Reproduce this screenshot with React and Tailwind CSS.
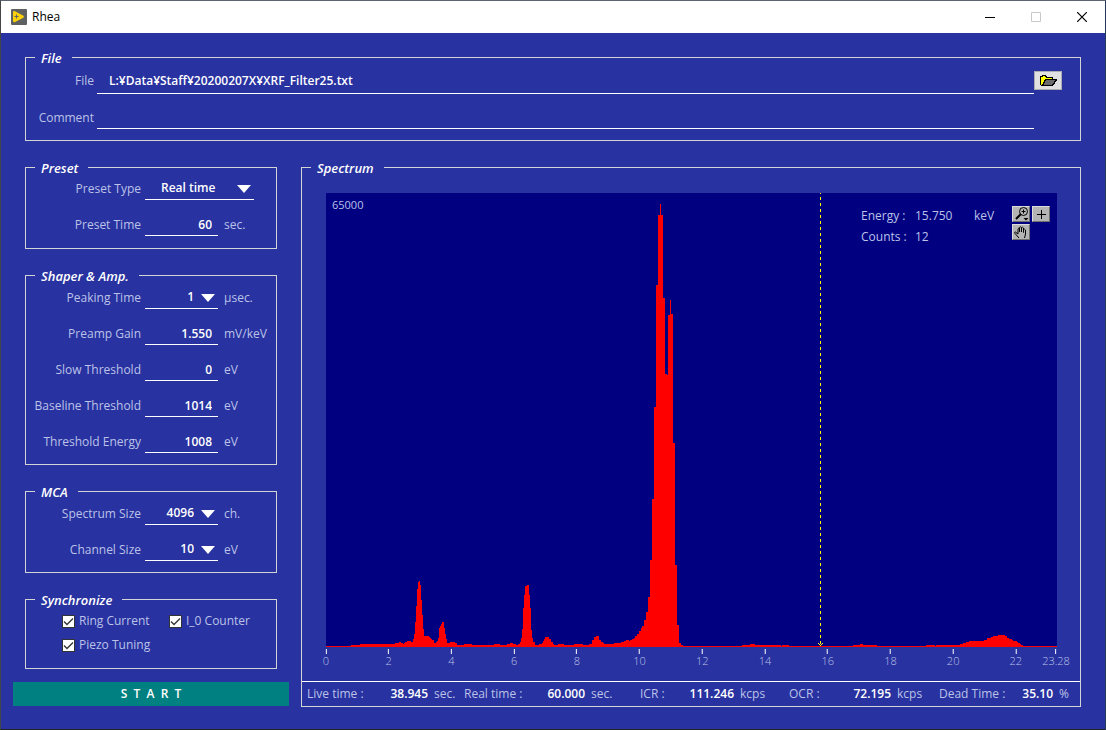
import { useState } from "react";

const MAX_ENERGY = 23.28;
const CURSOR_ENERGY = 15.75;
const PLOT_WIDTH = 731;
const PLOT_HEIGHT = 454;

const ticks = [0, 2, 4, 6, 8, 10, 12, 14, 16, 18, 20, 22, 23.28];

// [first column, height]: each level holds until the next one starts
const levels = [
  [0, 1], [25, 2], [34, 3], [69, 4], [73, 5], [75, 4], [77, 3], [78, 4], [79, 5], [81, 6], [85, 5],
  [87, 8], [88, 13], [89, 25], [90, 41], [91, 58], [92, 65], [93, 66], [94, 62], [95, 47], [96, 32],
  [97, 18], [98, 11], [103, 10], [104, 9], [105, 8], [106, 7], [108, 4], [110, 5], [111, 6], [112, 9],
  [113, 19], [114, 21], [115, 23], [116, 25], [118, 19], [119, 13], [120, 8], [121, 4], [124, 5],
  [129, 4], [131, 2], [138, 3], [146, 2], [168, 3], [174, 2], [181, 3], [184, 4], [187, 3], [190, 2],
  [192, 3], [194, 5], [195, 9], [196, 18], [197, 39], [198, 52], [199, 61], [201, 62], [203, 52],
  [204, 39], [205, 17], [206, 9], [207, 5], [209, 2], [213, 3], [216, 4], [217, 6], [218, 8],
  [219, 10], [223, 8], [225, 5], [227, 3], [228, 2], [232, 3], [238, 2], [248, 3], [257, 2], [263, 3],
  [266, 7], [268, 10], [270, 11], [273, 7], [275, 5], [277, 4], [278, 3], [288, 4], [295, 5], [298, 6],
  [300, 7], [303, 6], [304, 7], [306, 8], [308, 9], [309, 11], [311, 13], [313, 16], [315, 19],
  [316, 21], [318, 27], [320, 35], [322, 50], [324, 87], [326, 148], [328, 240], [330, 362],
  [332, 432], [334, 443], [335, 432], [337, 349], [339, 273], [341, 272], [342, 332], [344, 347],
  [345, 333], [347, 204], [349, 82], [351, 22], [353, 4], [355, 2], [357, 1], [416, 2], [424, 3],
  [429, 2], [455, 1], [456, 2], [463, 1], [527, 2], [534, 3], [537, 2], [551, 1], [600, 2], [609, 1],
  [610, 2], [634, 3], [637, 4], [640, 5], [643, 6], [658, 7], [661, 9], [665, 10], [667, 11],
  [672, 12], [679, 11], [681, 9], [683, 8], [686, 7], [687, 6], [691, 5], [692, 4], [694, 3],
  [695, 2], [697, 1],
];

const spectrumPath =
  `M0 ${PLOT_HEIGHT}` +
  levels.map(([x, h]) => `H${x}V${PLOT_HEIGHT - h}`).join("") +
  `H${PLOT_WIDTH}V${PLOT_HEIGHT}Z`;

const readouts = [
  { label: "Live time :", value: "38.945", unit: "sec.", width: "w-[121px]" },
  { label: "Real time :", value: "60.000", unit: "sec.", width: "w-[121px]" },
  { label: "ICR :", value: "111.246", unit: "kcps", width: "w-[94px]" },
  { label: "OCR :", value: "72.195", unit: "kcps", width: "w-[102px]" },
  { label: "Dead Time :", value: "35.10", unit: "%", width: "w-[114px]" },
];

const Panel = ({ title, className = "", children }) => (
  <fieldset className={`min-w-0 border border-[#d4d4d4] ${className}`}>
    <legend className="ml-[9px] h-5 pt-px pl-1.5 pr-2.5 text-[13px] leading-5 font-semibold italic text-white">
      {title}
    </legend>
    {children}
  </fieldset>
);

const Row = ({ id, label, unit, children }) => (
  <div className="flex h-[23px] items-center">
    <label htmlFor={id} className="mr-1 w-[115px] shrink-0 whitespace-nowrap text-right">
      {label}
    </label>
    {children}
    <span className="ml-1.5">{unit}</span>
  </div>
);

const NumberField = ({ id, label, unit, initial }) => {
  const [value, setValue] = useState(initial);
  return (
    <Row id={id} label={label} unit={unit}>
      <input
        id={id}
        type="text"
        value={value}
        onChange={(e) => setValue(e.target.value)}
        className="h-full w-[73px] border-b border-white pr-1.5 text-right font-semibold text-white outline-none"
      />
    </Row>
  );
};

const SelectField = ({ id, label, unit, options, wide }) => (
  <Row id={id} label={label} unit={unit}>
    <div className={`relative h-full border-b border-white ${wide ? "w-[109px]" : "w-[73px]"}`}>
      <select
        id={id}
        className={`h-full w-full appearance-none font-semibold text-white outline-none ${
          wide ? "pl-4" : "pr-6 text-right"
        }`}
      >
        {options.map((option) => (
          <option key={option}>{option}</option>
        ))}
      </select>
      <svg
        className="pointer-events-none absolute top-2 right-[3px]"
        width="14"
        height="8"
        viewBox="0 0 14 8"
      >
        <path d="M0 0h14L7 8z" fill="#fff" />
      </svg>
    </div>
  </Row>
);

const CheckField = ({ label }) => {
  const [checked, setChecked] = useState(true);
  return (
    <label className="flex items-center gap-1 whitespace-nowrap">
      <span className="relative size-[13px]">
        <input
          type="checkbox"
          checked={checked}
          onChange={() => setChecked(!checked)}
          className="block size-[13px] appearance-none border border-[#333] bg-white"
        />
        {checked && (
          <svg className="pointer-events-none absolute inset-0" width="13" height="13" viewBox="0 0 13 13">
            <path d="M2 6.500 5 9.500 11 3.500" fill="none" stroke="#333" strokeWidth="1.3" />
          </svg>
        )}
      </span>
      {label}
    </label>
  );
};

const TitleBar = () => (
  <header className="flex h-8 items-center bg-white pl-2.5 text-black">
    <svg width="16" height="16" viewBox="0 0 16 16">
      <rect width="16" height="16" rx="1" fill="#5f6062" />
      <path d="M2 3.2C2 2.2 3 1.8 4 2.2L12 6.4C13.2 7 13.2 8.4 12 9L4 13C3 13.500 2 13 2 12z" fill="#fdd10a" />
      <path d="M5.500 5.500v4M3.500 7.500h4" stroke="#5f6062" />
    </svg>
    <h1 className="ml-[5px] flex-1 font-normal">Rhea</h1>
    <button aria-label="Minimize" className="flex h-full w-[46px] items-center justify-center">
      <svg width="10" height="10" viewBox="0 0 10 10" shapeRendering="crispEdges">
        <path d="M0 5.500h10" stroke="#000" />
      </svg>
    </button>
    <button aria-label="Maximize" disabled className="flex h-full w-[46px] items-center justify-center">
      <svg width="10" height="10" viewBox="0 0 10 10">
        <path d="M.5.5h9v9h-9z" fill="none" stroke="#c8c8c8" />
      </svg>
    </button>
    <button aria-label="Close" className="flex h-full w-[46px] items-center justify-center">
      <svg width="10" height="10" viewBox="0 0 10 10">
        <path d="M0 0l10 10M10 0 0 10" stroke="#000" strokeWidth="1.2" />
      </svg>
    </button>
  </header>
);

const FilePanel = () => {
  const [file, setFile] = useState("L:¥Data¥Staff¥20200207X¥XRF_Filter25.txt");
  const [comment, setComment] = useState("");
  return (
    <Panel title="File" className="mx-3 pb-[11px]">
      <div className="flex h-[27px] items-center pr-[18px]">
        <label htmlFor="file" className="mr-[3px] w-[68px] text-right">File</label>
        <input
          id="file"
          type="text"
          value={file}
          onChange={(e) => setFile(e.target.value)}
          className="h-full min-w-0 flex-1 border-b border-white pl-3 font-semibold text-white outline-none"
        />
        <button
          aria-label="Open file"
          className="flex h-[19px] w-7 items-center justify-center border border-[#adadad] bg-[#e1e1e1]"
        >
          <svg width="17" height="11" viewBox="0 0 17 11" shapeRendering="crispEdges">
            <path d="M1 10V2h1V1h3v1h1v1h6v2H5v2H4v2H2v1z" fill="#ff0" />
            <path d="M5 5h11v1h-1v1h-1v2h-1v1H2V9h1V7h1V6h1z" fill="#6b6b6b" />
            <path
              d="M.5 10V1.500H2V.5h3.500v1H6v1h6.500V5M1 10.500h11.500V9.500h1V8h1V6.500h1V5.500h1.500V4.500H5.500v1h-1V7h-1v2h-1v1"
              fill="none"
              stroke="#000"
            />
          </svg>
        </button>
      </div>
      <div className="mt-3 flex h-[23px] items-center pr-[46px]">
        <label htmlFor="comment" className="mr-[3px] w-[68px] text-right">Comment</label>
        <input
          id="comment"
          type="text"
          value={comment}
          onChange={(e) => setComment(e.target.value)}
          className="h-full min-w-0 flex-1 border-b border-white pl-3 font-semibold text-white outline-none"
        />
      </div>
    </Panel>
  );
};

const ToolButton = ({ label, children }) => (
  <button
    aria-label={label}
    className="h-4 w-[18px] border border-t-[#dcdcdc] border-l-[#dcdcdc] border-r-[#6e6e6e] border-b-[#6e6e6e] bg-[#b4b4b4]"
  >
    <svg width="16" height="14" viewBox="0 0 16 14" fill="none" stroke="#000">
      {children}
    </svg>
  </button>
);

const Plot = () => (
  <div className="relative min-h-[454px] flex-1 bg-[#000080]">
    <svg
      className="absolute inset-0 h-full w-full"
      viewBox={`0 0 ${PLOT_WIDTH} ${PLOT_HEIGHT}`}
      preserveAspectRatio="none"
      shapeRendering="crispEdges"
    >
      <path d={spectrumPath} fill="#f00" />
      <path
        d={`M494.5 0V${PLOT_HEIGHT}`}
        stroke="#ff0"
        strokeDasharray="3 3"
        strokeDashoffset="2"
      />
      <path d="M492 450h1v1h1v1h1v-1h1v-1h1v1h-1v1h-1v1h-1v-1h-1v-1h-1z" fill="#ff0" />
    </svg>
    <div className="relative flex items-start pt-1 pl-1.5 pr-[7px]">
      <span className="flex-1 text-[11px] leading-4">65000</span>
      <dl className="mt-2 grid grid-cols-[54px_59px_38px] leading-[21px]">
        <dt>Energy :</dt>
        <dd>{CURSOR_ENERGY.toFixed(3)}</dd>
        <dd>keV</dd>
        <dt>Counts :</dt>
        <dd>12</dd>
      </dl>
      <div className="mt-[9px] grid grid-cols-2 gap-0.5">
        <ToolButton label="Zoom">
          <circle cx="10.500" cy="4.500" r="4" />
          <path d="M10.500 2.500v4M8.500 4.500h4" />
          <path d="M8 7 3 12" strokeWidth="2" />
          <path d="M10.500 11h5l-2.500 2.500z" fill="#000" stroke="none" />
        </ToolButton>
        <ToolButton label="Cursor">
          <path d="M8.500 3v9M4 7.500h9" />
        </ToolButton>
        <ToolButton label="Pan">
          <path d="M6 13 2 8.500Q1 7 2.500 7L5 9V4Q5.500 2.500 6.500 4V7 2.500Q7.500 1 8.500 2.500V7 3Q9.500 1.500 10.500 3V7.500 4.500Q11.500 3.500 12.500 5V9L11.500 13" />
        </ToolButton>
      </div>
    </div>
  </div>
);

const Axis = () => (
  <div className="relative mt-0.5 mr-px h-5">
    {ticks.map((tick) => (
      <span
        key={tick}
        className="absolute top-0 flex -translate-x-1/2 flex-col items-center text-[11px] leading-[14px] font-light"
        style={{ left: `${(tick / MAX_ENERGY) * 100}%` }}
      >
        <span className="h-[5px] w-px bg-white" />
        {tick}
      </span>
    ))}
  </div>
);

const StatusBar = () => (
  <dl className="grid h-[25px] grid-cols-[157fr_176fr_149fr_150fr_141fr] items-center border-t border-white pl-[5px]">
    {readouts.map(({ label, value, unit, width }) => (
      <div key={label} className="flex gap-1.5 whitespace-nowrap">
        <div className={`flex justify-between ${width}`}>
          <dt>{label}</dt>
          <dd className="font-semibold text-white">{value}</dd>
        </div>
        <dd>{unit}</dd>
      </div>
    ))}
  </dl>
);

export default function App() {
  return (
    <div className="flex min-h-screen flex-col border border-t-[#5a6470] border-r-[#243a5c] border-b-[#222] border-l-[#444] bg-[#2832a0] font-['Open_Sans','Noto_Sans',sans-serif] text-xs leading-5 text-[#bcc2e8]">
      <TitleBar />
      <main className="flex flex-1 flex-col gap-4 px-3 pt-3.5 pb-[22px]">
        <FilePanel />
        <div className="flex flex-1 gap-3">
          <div className="flex w-[276px] shrink-0 flex-col">
            <div className="flex flex-col gap-4 px-3">
              <Panel title="Preset">
                <div className="flex flex-col gap-[13px] pb-3">
                  <SelectField id="preset-type" label="Preset Type" options={["Real time", "Live time"]} wide />
                  <NumberField id="preset-time" label="Preset Time" unit="sec." initial="60" />
                </div>
              </Panel>
              <Panel title="Shaper & Amp.">
                <div className="flex flex-col gap-[13px] pt-px pb-[11px]">
                  <SelectField id="peaking-time" label="Peaking Time" unit="µsec." options={["1", "2", "4"]} />
                  <NumberField id="preamp-gain" label="Preamp Gain" unit="mV/keV" initial="1.550" />
                  <NumberField id="slow-threshold" label="Slow Threshold" unit="eV" initial="0" />
                  <NumberField id="baseline-threshold" label="Baseline Threshold" unit="eV" initial="1014" />
                  <NumberField id="threshold-energy" label="Threshold Energy" unit="eV" initial="1008" />
                </div>
              </Panel>
              <Panel title="MCA">
                <div className="flex flex-col gap-[13px] pt-px pb-[11px]">
                  <SelectField id="spectrum-size" label="Spectrum Size" unit="ch." options={["4096", "2048", "1024"]} />
                  <SelectField id="channel-size" label="Channel Size" unit="eV" options={["10", "20"]} />
                </div>
              </Panel>
              <Panel title="Synchronize">
                <div className="grid auto-rows-[24px] grid-cols-[107px_1fr] pb-[11px] pl-9">
                  <CheckField label="Ring Current" />
                  <CheckField label="I_0 Counter" />
                  <CheckField label="Piezo Tuning" />
                </div>
              </Panel>
            </div>
            <button className="mt-[13px] h-6 whitespace-pre bg-[#008080] font-semibold text-white">
              S  T  A  R  T
            </button>
          </div>
          <Panel title="Spectrum" className="mr-3 flex flex-1 flex-col">
            <div className="flex flex-1 flex-col pt-4 pr-[23px] pb-3 pl-6">
              <Plot />
              <Axis />
            </div>
            <StatusBar />
          </Panel>
        </div>
      </main>
    </div>
  );
}
